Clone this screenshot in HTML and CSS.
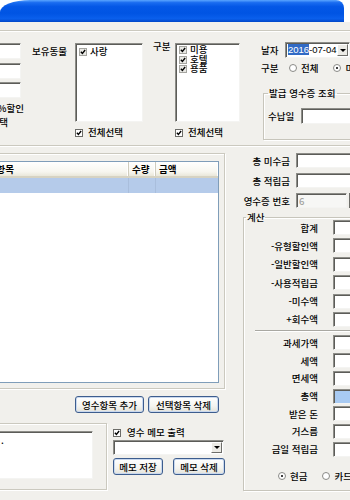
FILE: index.html
```html
<!DOCTYPE html>
<html lang="ko">
<head>
    <meta charset="UTF-8">
    <title>영수증 발급</title>
    <link rel="stylesheet" href="styles.css">
</head>
<body>
<div class="window">
    <div class="titlebar"></div>
    <div class="client">

        <!-- Top panel: filters -->
        <div class="top-panel">
            <div class="col-left">
                <input class="txt" type="text">
                <input class="txt" type="text">
                <input class="txt" type="text">
                <div class="cut-text">5%할인</div>
                <div class="cut-text short">전체선택</div>
            </div>

            <div class="lbl lbl-pets">보유동물</div>
            <div class="list-col col-pets">
                <div class="listbox">
                    <div class="item"><span class="chk"><svg viewBox="0 0 7 7"><path d="M1 3.2 L2.8 5.2 L6 1.2"/></svg></span>사랑</div>
                </div>
                <div class="check"><span class="chk"><svg viewBox="0 0 7 7"><path d="M1 3.2 L2.8 5.2 L6 1.2"/></svg></span>전체선택</div>
            </div>

            <div class="lbl lbl-kind">구분</div>
            <div class="list-col col-kind">
                <div class="listbox tight">
                    <div class="item"><span class="chk"><svg viewBox="0 0 7 7"><path d="M1 3.2 L2.8 5.2 L6 1.2"/></svg></span>미용</div>
                    <div class="item"><span class="chk"><svg viewBox="0 0 7 7"><path d="M1 3.2 L2.8 5.2 L6 1.2"/></svg></span>호텔</div>
                    <div class="item"><span class="chk"><svg viewBox="0 0 7 7"><path d="M1 3.2 L2.8 5.2 L6 1.2"/></svg></span>용품</div>
                </div>
                <div class="check"><span class="chk"><svg viewBox="0 0 7 7"><path d="M1 3.2 L2.8 5.2 L6 1.2"/></svg></span>전체선택</div>
            </div>

            <div class="col-right">
                <div class="date-row">
                    <span class="row-lbl">날자</span>
                    <div class="combo date-combo">
                        <span class="combo-text"><span class="sel">2016</span>-07-04</span>
                        <span class="drop"><span class="arrow"></span></span>
                    </div>
                </div>
                <div class="kind-row">
                    <span class="row-lbl">구분</span>
                    <span class="radio"></span><span class="radio-text">전체</span>
                    <span class="radio on"></span><span class="radio-text">미발급</span>
                </div>
                <fieldset class="group group-issue">
                    <legend>발급 영수증 조회</legend>
                    <div class="pay-row">
                        <span class="pay-lbl">수납일</span>
                        <input class="txt pay-input" type="text">
                    </div>
                </fieldset>
            </div>
        </div>

        <!-- Middle: receipt items and calculation -->
        <div class="mid">
            <div class="mid-left">
                <div class="list-panel">
                    <div class="listview">
                        <div class="lv-head">
                            <div class="lv-col c-name">영수항목</div>
                            <div class="lv-col c-qty">수량</div>
                            <div class="lv-col c-amt">금액</div>
                        </div>
                        <div class="lv-row selected">
                            <div class="lv-col c-name"></div>
                            <div class="lv-col c-qty"></div>
                            <div class="lv-col c-amt"></div>
                        </div>
                    </div>
                </div>

                <div class="btn-row">
                    <button class="btn btn-add">영수항목 추가</button>
                    <button class="btn btn-del">선택항목 삭제</button>
                </div>

                <div class="memo-row">
                    <div class="memo-group">
                        <textarea class="memo">.</textarea>
                    </div>
                    <div class="memo-side">
                        <div class="check memo-check"><span class="chk"><svg viewBox="0 0 7 7"><path d="M1 3.2 L2.8 5.2 L6 1.2"/></svg></span>영수 메모 출력</div>
                        <div class="combo memo-combo">
                            <span class="combo-text"></span>
                            <span class="drop"><span class="arrow"></span></span>
                        </div>
                        <div class="memo-btns">
                            <button class="btn btn-save">메모 저장</button>
                            <button class="btn btn-mdel">메모 삭제</button>
                        </div>
                    </div>
                </div>
            </div>

            <div class="mid-right">
                <div class="info-row">
                    <span class="info-lbl">총 미수금</span>
                    <input class="txt info-input" type="text">
                </div>
                <div class="info-row">
                    <span class="info-lbl">총 적립금</span>
                    <input class="txt info-input" type="text">
                </div>
                <div class="info-row">
                    <span class="info-lbl">영수증 번호</span>
                    <input class="txt info-input short disabled" type="text" value="6">
                    <span class="edge-btn"></span>
                </div>

                <fieldset class="group group-calc">
                    <legend>계산</legend>
                    <div class="calc-rows first">
                        <div class="calc-row"><span class="calc-lbl">합계</span><input class="txt calc-input" type="text"></div>
                        <div class="calc-row"><span class="calc-lbl">-유형할인액</span><input class="txt calc-input" type="text"></div>
                        <div class="calc-row"><span class="calc-lbl">-일반할인액</span><input class="txt calc-input" type="text"></div>
                        <div class="calc-row"><span class="calc-lbl">-사용적립금</span><input class="txt calc-input" type="text"></div>
                        <div class="calc-row"><span class="calc-lbl">-미수액</span><input class="txt calc-input" type="text"></div>
                        <div class="calc-row"><span class="calc-lbl">+회수액</span><input class="txt calc-input" type="text"></div>
                    </div>
                    <div class="calc-sep"></div>
                    <div class="calc-rows second">
                        <div class="calc-row"><span class="calc-lbl">과세가액</span><input class="txt calc-input" type="text"></div>
                        <div class="calc-row"><span class="calc-lbl">세액</span><input class="txt calc-input" type="text"></div>
                        <div class="calc-row"><span class="calc-lbl">면세액</span><input class="txt calc-input" type="text"></div>
                        <div class="calc-row"><span class="calc-lbl">총액</span><input class="txt calc-input total" type="text"></div>
                        <div class="calc-row"><span class="calc-lbl">받은 돈</span><input class="txt calc-input" type="text"></div>
                        <div class="calc-row"><span class="calc-lbl">거스름</span><input class="txt calc-input" type="text"></div>
                        <div class="calc-row"><span class="calc-lbl">금일 적립금</span><input class="txt calc-input" type="text"></div>
                    </div>
                    <div class="pay-type">
                        <span class="radio on"></span><span class="radio-text">현금</span>
                        <span class="radio"></span><span class="radio-text">카드</span>
                    </div>
                </fieldset>
            </div>
        </div>
    </div>
</div>
</body>
</html>
```

FILE: styles.css
```css
* {
    box-sizing: border-box;
}

html, body {
    margin: 0;
    padding: 0;
}

body {
    width: 350px;
    height: 500px;
    overflow: hidden;
    background: #fff;
    font-family: "Noto Sans CJK KR", sans-serif;
    font-size: 9.5px;
    font-weight: 500;
    line-height: 12px;
    color: #000;
}

.window {
    width: 350px;
    height: 500px;
    overflow: hidden;
}

/* XP style title bar */
.titlebar {
    width: 344px;
    height: 22px;
    border-radius: 30px 8px 0 0 / 12px 8px 0 0;
    background: linear-gradient(to bottom, #5aa5ff 0, #1a6cf0 12%, #0457e6 30%, #0054e3 60%, #0a5fec 85%, #0046c8 100%);
}

.client {
    height: 478px;
    background: #f1f0ec;
    display: flex;
    flex-direction: column;
}

/* common controls */
.txt {
    display: block;
    height: 16px;
    margin: 0;
    padding: 0 2px;
    background: #fff;
    border: 1px solid;
    border-color: #8d8d88 #f4f4f2 #f4f4f2 #8d8d88;
    box-shadow: inset 1px 1px 0 #5c5c58;
    font: inherit;
    outline: none;
}

.chk {
    display: inline-block;
    width: 8px;
    height: 8px;
    margin-right: 5px;
    background: #fff;
    border: 1px solid #6c6c68;
    vertical-align: -1px;
}

.chk svg {
    display: block;
    width: 6px;
    height: 6px;
}

.chk path {
    fill: none;
    stroke: #000;
    stroke-width: 1.6;
}

.radio {
    flex: none;
    display: inline-block;
    width: 8px;
    height: 8px;
    border: 1px solid #8a8a86;
    border-radius: 50%;
    background: #fff;
    position: relative;
}

.radio.on::after {
    content: "";
    position: absolute;
    left: 2px;
    top: 2px;
    width: 2px;
    height: 2px;
    border-radius: 50%;
    background: #000;
}

.radio-text {
    margin-left: 4px;
}

.combo {
    display: flex;
    height: 16px;
    background: #fff;
    border: 1px solid;
    border-color: #8d8d88 #f4f4f2 #f4f4f2 #8d8d88;
    box-shadow: inset 1px 1px 0 #5c5c58;
}

.combo-text {
    flex: 1;
    padding: 1px 0 0 2px;
    line-height: 12px;
    white-space: nowrap;
    overflow: hidden;
}

.drop {
    width: 11px;
    margin: 1px 1px 1px 0;
    background: #ecebe6;
    border: 1px solid;
    border-color: #fff #6e6e6a #6e6e6a #fff;
    display: flex;
    align-items: center;
    justify-content: center;
}

.arrow {
    width: 0;
    height: 0;
    border-left: 3px solid transparent;
    border-right: 3px solid transparent;
    border-top: 3px solid #000;
}

.group {
    margin: 0;
    border: 1px solid #c7c5bb;
    box-shadow: inset 1px 1px 0 #fff, 1px 1px 0 #fff;
}

.group legend {
    padding: 0 1px;
    line-height: 8px;
}

.btn {
    display: block;
    height: 17px;
    padding: 0;
    font: inherit;
    color: #000;
    background: linear-gradient(to bottom, #fff 0, #f4f4f0 60%, #e3e2da 100%);
    border: 1px solid #3d5d8e;
    border-radius: 3px;
    box-shadow: inset 0 0 0 1px #c9d8ee;
}

/* top panel */
.top-panel {
    margin-top: 8px;
    height: 116px;
    border-top: 1px solid #cbc9bf;
    border-bottom: 1px solid #cbc9bf;
    box-shadow: inset 0 1px 0 #fff, 0 1px 0 #fff;
    display: flex;
    align-items: flex-start;
}

.col-left {
    flex: none;
    width: 65px;
    margin-left: -40px;
    padding-top: 12px;
}

.col-left .txt {
    width: 61px;
    margin-bottom: 4px;
}

.col-left .txt:nth-child(2) {
    margin-bottom: 3px;
}

.cut-text {
    width: 64px;
    margin-top: 1px;
    text-align: right;
    white-space: nowrap;
}

.cut-text.short {
    width: 48px;
    margin-top: 2px;
}

.lbl {
    flex: none;
    white-space: nowrap;
}

.lbl-pets {
    width: 40px;
    margin-left: 7px;
    padding-top: 14px;
}

.list-col {
    flex: none;
    padding-top: 12px;
}

.col-pets {
    width: 68px;
    margin-left: 3px;
}

.lbl-kind {
    width: 20px;
    margin-left: 10px;
    padding-top: 9px;
}

.col-kind {
    width: 65px;
    margin-left: 2px;
}

.listbox {
    height: 79px;
    padding: 1px 2px;
    background: #fff;
    border: 1px solid;
    border-color: #8d8d88 #f4f4f2 #f4f4f2 #8d8d88;
    box-shadow: inset 1px 1px 0 #5c5c58;
}

.listbox .item {
    white-space: nowrap;
    padding-left: 1px;
}

.listbox .chk {
    margin-right: 3px;
    border-color: #a5a5a0;
    background: #e8e8e4;
}

.listbox.tight .item {
    line-height: 9.5px;
}

.check {
    margin-top: 4px;
    white-space: nowrap;
}

.col-right {
    flex: none;
    width: 110px;
    margin-left: 21px;
    padding-top: 11px;
}

.row-lbl {
    flex: none;
    display: inline-block;
    width: 24px;
}

.date-row {
    display: flex;
    align-items: center;
}

.date-combo {
    width: 65px;
}

.date-combo .combo-text {
    font-family: "Liberation Sans", sans-serif;
    font-weight: 400;
}

.sel {
    background: #316ac5;
    color: #fff;
}

.kind-row {
    display: flex;
    align-items: center;
    margin-top: 4px;
    white-space: nowrap;
}

.kind-row .radio {
    margin-left: 4px;
}

.kind-row .radio.on {
    margin-left: 15px;
}

.group-issue {
    margin: 15px 0 0 2px;
    padding: 11px 0 15px 4px;
}

.pay-row {
    display: flex;
    align-items: center;
}

.pay-lbl {
    width: 33px;
}

.pay-input {
    width: 60px;
}

/* middle */
.mid {
    display: flex;
    align-items: flex-start;
}

.mid-left {
    flex: none;
    width: 265px;
    margin-left: -40px;
}

.list-panel {
    margin-top: 7px;
    height: 236px;
    padding: 7px 5px 0 0;
    border: 1px solid #cbc9bf;
    box-shadow: inset 1px 1px 0 #fff, 1px 1px 0 #fff;
}

.listview {
    height: 222px;
    background: #fff;
    border: 1px solid #7f9db9;
}

.lv-head,
.lv-row {
    display: flex;
    height: 15px;
}

.lv-head {
    background: linear-gradient(to bottom, #fff 0, #f7f6ef 70%, #e9e7da 100%);
    border-bottom: 2px solid #d6d3c3;
    height: 16px;
    font-weight: 700;
}

.lv-col {
    border-right: 1px solid #cfccbd;
    white-space: nowrap;
}

.lv-head .lv-col {
    padding-top: 1px;
    box-shadow: inset -1px 0 0 #fff;
}

.c-name {
    flex: 1;
    padding-left: 17px;
}

.c-qty {
    width: 27px;
    padding-left: 3px;
}

.c-amt {
    width: 62px;
    padding-left: 3px;
    border-right: none;
}

.lv-row.selected {
    background: #b5cbea;
}

.lv-row .lv-col {
    border-right-color: #a9bedc;
}

.btn-row {
    display: flex;
    justify-content: flex-end;
    gap: 4px;
    margin-top: 7px;
    padding-right: 6px;
}

.btn-add {
    width: 69px;
}

.btn-del {
    width: 71px;
}

.memo-row {
    display: flex;
    align-items: flex-start;
    margin-top: 10px;
}

.memo-group {
    width: 147px;
    height: 67px;
    padding: 7px 13px 0 0;
    border: 1px solid #cbc9bf;
    border-left: none;
    box-shadow: inset 0 1px 0 #fff, 1px 1px 0 #fff;
}

.memo {
    display: block;
    width: 100%;
    height: 48px;
    margin: 0;
    padding: 2px 0 0 40px;
    resize: none;
    font: inherit;
    background: #fff;
    border: 1px solid;
    border-color: #8d8d88 #f4f4f2 #f4f4f2 #8d8d88;
    box-shadow: inset 1px 1px 0 #5c5c58;
    outline: none;
}

.memo-side {
    width: 112px;
    margin-left: 6px;
}

.memo-check {
    margin-top: 3px;
}

.memo-check .chk {
    margin-right: 6px;
}

.memo-combo {
    width: 111px;
    height: 15px;
    margin-top: 2px;
}

.memo-btns {
    display: flex;
    gap: 10px;
    margin-top: 3px;
}

.btn-save {
    width: 50px;
}

.btn-mdel {
    width: 52px;
}

.mid-right {
    flex: none;
    width: 120px;
    margin-left: 17px;
    padding-top: 7px;
}

.info-row {
    display: flex;
    align-items: center;
    height: 15px;
    margin-bottom: 5px;
    white-space: nowrap;
}

.info-lbl {
    width: 54px;
    padding-right: 6px;
    text-align: right;
    direction: rtl;
}

.info-input {
    width: 60px;
    height: 15px;
}

.info-input.short {
    width: 51px;
}

.info-input.disabled {
    color: #a3a3a0;
    background: #f7f7f5;
}

.edge-btn {
    width: 6px;
    height: 15px;
    margin-left: 2px;
    background: #ecebe6;
    border: 1px solid #6e6e6a;
    border-right: none;
}

.group-calc {
    margin: 5px 0 0 1px;
    height: 278px;
    padding: 0 0 0 2px;
}

.calc-rows {
    display: flex;
    flex-direction: column;
}

.calc-rows.first {
    gap: 3.4px;
    margin-top: -1px;
}

.calc-rows.second {
    gap: 2.7px;
}

.calc-row {
    display: flex;
    align-items: center;
    height: 15px;
    white-space: nowrap;
}

.calc-lbl {
    width: 72px;
    text-align: right;
}

.calc-input {
    width: 30px;
    height: 15px;
    margin-left: 15px;
}

.calc-input.total {
    background: #a8caf2;
}

.calc-sep {
    height: 2px;
    margin: 3.5px 0 3px 9px;
    border-top: 1px solid #a9a8a2;
    border-bottom: 1px solid #fff;
}

.pay-type {
    display: flex;
    align-items: center;
    margin-top: 13px;
    padding-left: 32px;
    white-space: nowrap;
}

.pay-type .radio + .radio-text + .radio {
    margin-left: 15px;
}
```
